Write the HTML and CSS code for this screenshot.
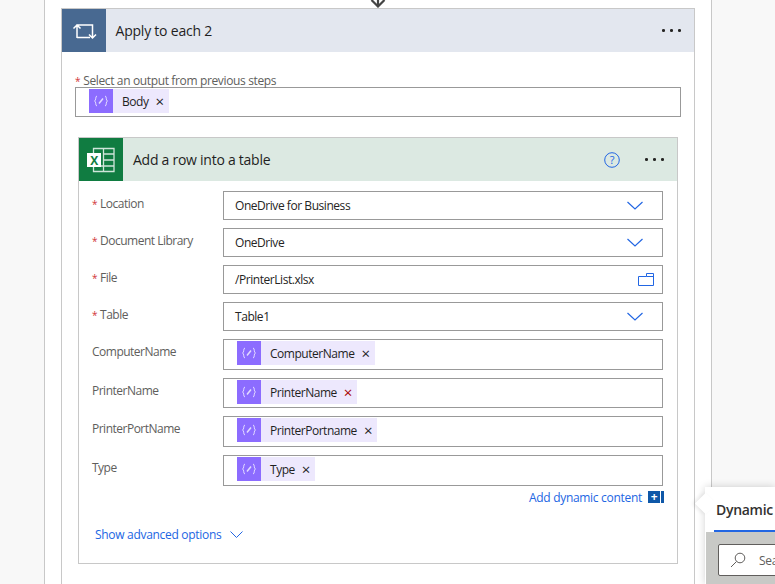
FILE: index.html
```html
<!DOCTYPE html>
<html lang="en">

<head>
    <meta charset="UTF-8" />
    <title>Add a row into a table</title>
    <link rel="stylesheet" href="styles.css">
</head>

<body>
    <div class="canvas">
        <div class="connector">
            <svg width="18" height="8" viewBox="0 0 18 8"><path d="M9 -6V5M2.500 0L9 6.500L15.500 0" fill="none" stroke="#444" stroke-width="2.200"/></svg>
        </div>
        <div class="card outer">
            <div class="card-head head-loop">
                <div class="head-icon icon-loop">
                    <svg width="44" height="44" viewBox="0 0 44 44"><path d="M15 29V16H30.500V29M11.500 19.500L15 16L18.500 19.500M27 25.500L30.500 29L34 25.500M15 28.500H28" fill="none" stroke="#fff" stroke-width="1.500"/></svg>
                </div>
                <div class="head-title">Apply to each 2</div>
                <div class="dots"><i></i><i></i><i></i></div>
            </div>
            <div class="outer-body">
                <div class="top-label"><span class="req">*</span>Select an output from previous steps</div>
                <div class="box box-top">
                    <span class="token">
                        <span class="token-icon"><svg width="16" height="12" viewBox="0 0 16 12"><use href="#expr"/></svg></span>
                        <span class="token-text">Body</span><span class="token-x">×</span>
                    </span>
                </div>

                <div class="card inner">
                    <div class="card-head head-excel">
                        <div class="head-icon icon-excel">
                            <svg width="44" height="44" viewBox="0 0 44 44">
                                <path d="M14.500 10.500H35V33.500H14.500ZM24.500 10.500V33.500M24.500 16H35M24.500 22H35M24.500 28H35M14.500 28H24.500" fill="none" stroke="#fff" stroke-opacity=".8" stroke-width="1.300"/>
                                <rect x="8" y="15" width="14" height="14" fill="#fff"/>
                                <text x="15" y="26.500" text-anchor="middle" class="excel-x">X</text>
                            </svg>
                        </div>
                        <div class="head-title title-excel">Add a row into a table</div>
                        <svg class="help" width="16" height="16" viewBox="0 0 16 16">
                            <circle cx="8" cy="8" r="7.300" fill="none" stroke="#2266e3"/>
                            <text x="8" y="12" text-anchor="middle" class="help-mark">?</text>
                        </svg>
                        <div class="dots"><i></i><i></i><i></i></div>
                    </div>
                    <div class="form">
                        <div class="row">
                            <div class="label"><span class="req">*</span>Location</div>
                            <div class="box box-text"><span class="value">OneDrive for Business</span>
                                <svg class="chev" width="16" height="9" viewBox="0 0 16 9"><path d="M.500 1L8 8L15.500 1" fill="none" stroke="#2266e3" stroke-width="1.200"/></svg>
                            </div>
                        </div>
                        <div class="row">
                            <div class="label"><span class="req">*</span>Document Library</div>
                            <div class="box box-text"><span class="value">OneDrive</span>
                                <svg class="chev" width="16" height="9" viewBox="0 0 16 9"><path d="M.500 1L8 8L15.500 1" fill="none" stroke="#2266e3" stroke-width="1.200"/></svg>
                            </div>
                        </div>
                        <div class="row">
                            <div class="label"><span class="req">*</span>File</div>
                            <div class="box box-text"><span class="value">/PrinterList.xlsx</span>
                                <svg class="folder" width="16" height="13" viewBox="0 0 16 13"><path d="M.500 3.500H8.500V.500H15.500V12.500H.500ZM8.500 3.500H15.500" fill="none" stroke="#2266e3"/></svg>
                            </div>
                        </div>
                        <div class="row">
                            <div class="label"><span class="req">*</span>Table</div>
                            <div class="box box-text"><span class="value">Table1</span>
                                <svg class="chev" width="16" height="9" viewBox="0 0 16 9"><path d="M.500 1L8 8L15.500 1" fill="none" stroke="#2266e3" stroke-width="1.200"/></svg>
                            </div>
                        </div>
                        <div class="row">
                            <div class="label">ComputerName</div>
                            <div class="box box-token">
                                <span class="token">
                                    <span class="token-icon"><svg width="16" height="12" viewBox="0 0 16 12"><use href="#expr"/></svg></span>
                                    <span class="token-text">ComputerName</span><span class="token-x">×</span>
                                </span>
                            </div>
                        </div>
                        <div class="row">
                            <div class="label">PrinterName</div>
                            <div class="box box-token box-short">
                                <span class="token">
                                    <span class="token-icon"><svg width="16" height="12" viewBox="0 0 16 12"><use href="#expr"/></svg></span>
                                    <span class="token-text">PrinterName</span><span class="token-x x-red">×</span>
                                </span>
                            </div>
                        </div>
                        <div class="row">
                            <div class="label">PrinterPortName</div>
                            <div class="box box-token">
                                <span class="token">
                                    <span class="token-icon"><svg width="16" height="12" viewBox="0 0 16 12"><use href="#expr"/></svg></span>
                                    <span class="token-text">PrinterPortname</span><span class="token-x">×</span>
                                </span>
                            </div>
                        </div>
                        <div class="row">
                            <div class="label">Type</div>
                            <div class="box box-token">
                                <span class="token">
                                    <span class="token-icon"><svg width="16" height="12" viewBox="0 0 16 12"><use href="#expr"/></svg></span>
                                    <span class="token-text">Type</span><span class="token-x">×</span>
                                </span>
                            </div>
                        </div>
                        <div class="dynamic-link">
                            <span>Add dynamic content</span>
                            <span class="plus">+</span><span class="plus-bar"></span>
                        </div>
                        <div class="advanced">
                            <span>Show advanced options</span>
                            <svg width="13" height="7" viewBox="0 0 13 7"><path d="M.500 .500L6.500 6.500L12.500 .500" fill="none" stroke="#2266e3"/></svg>
                        </div>
                    </div>
                </div>
            </div>
        </div>
    </div>

    <div class="panel">
        <div class="panel-arrow"></div>
        <div class="panel-tab">Dynamic</div>
        <div class="panel-search">
            <div class="search-box">
                <svg width="16" height="16" viewBox="0 0 16 16"><circle cx="10" cy="6" r="4.800" fill="none" stroke="#605e5c"/><path d="M6.500 9.500L1 15" stroke="#605e5c" fill="none"/></svg>
                <span>Search</span>
            </div>
        </div>
    </div>

    <svg width="0" height="0" class="defs">
        <defs>
            <g id="expr" fill="none" stroke="#fff" stroke-opacity=".75">
                <path d="M4 1C2 1 3.500 5.500 1.500 6C3.500 6.500 2 11 4 11M12 1C14 1 12.500 5.500 14.500 6C12.500 6.500 14 11 12 11"/>
                <path d="M6 8.500L10 3.500"  stroke-width="1.500"/>
            </g>
        </defs>
    </svg>
</body>

</html>
```
FILE: styles.css
```css
* {
  box-sizing: border-box;
}

html,
body {
  margin: 0;
  height: 584px;
  overflow: hidden;
}

body {
  font-family: 'Open Sans', 'Noto Sans', sans-serif;
  font-size: 12px;
  color: #252423;
  background-color: #f8f8f8;
  letter-spacing: -0.3px;
}

.defs {
  position: absolute;
}

.canvas {
  width: 668px;
  height: 584px;
  margin-left: 44px;
  padding: 0 16px;
  background-color: #fff;
  border-left: 1px solid #c8c8c8;
  border-right: 1px solid #c8c8c8;
}

.connector {
  display: flex;
  justify-content: center;
  height: 8px;
}

.connector svg {
  display: block;
}

.card {
  border: 1px solid #c8c8c8;
  background-color: #fff;
}

.outer {
  height: 600px;
}

.card-head {
  display: flex;
  align-items: center;
  height: 43px;
}

.head-loop {
  background-color: #e3e7ef;
}

.head-excel {
  background-color: #dce9e2;
}

.head-icon {
  width: 44px;
  height: 43px;
  flex: none;
  overflow: hidden;
}

.head-icon svg {
  display: block;
}

.icon-loop {
  background-color: #486991;
}

.icon-excel {
  background-color: #107c41;
}

.excel-x {
  font-family: 'Open Sans', sans-serif;
  font-size: 12px;
  font-weight: 700;
  fill: #107c41;
}

.head-title {
  flex: 1;
  padding-left: 9.500px;
  font-size: 14px;
  letter-spacing: -0.22px;
  color: #1f1f1f;
}

.title-excel {
  padding-left: 10px;
  letter-spacing: -0.26px;
}

.help {
  flex: none;
  margin-right: 25px;
}

.help-mark {
  font-family: 'Open Sans', sans-serif;
  font-size: 11px;
  fill: #2266e3;
}

.dots {
  display: flex;
  gap: 5.5px;
  flex: none;
  margin-right: 13px;
}

.dots i {
  display: block;
  width: 2.600px;
  height: 2.600px;
  border-radius: 50%;
  background-color: #252423;
}

.outer-body {
  padding: 21px 13px 0 13px;
}

.top-label {
  height: 14px;
  line-height: 16px;
  letter-spacing: -0.36px;
  color: #605e5c;
}

.req {
  font-size: 10px;
  color: #d13438;
  margin-right: 3px;
}

.box {
  border: 1px solid #999;
  background-color: #fff;
}

.box-top {
  height: 30px;
  padding: 1px 13px;
}

.inner {
  margin: 20px 3px 0 3px;
  height: 427px;
}

.form {
  padding: 10px 14px 0 13px;
}

.row {
  display: flex;
  margin-bottom: 8px;
}

.label {
  width: 131px;
  flex: none;
  padding-top: 5px;
  line-height: 16px;
  letter-spacing: -0.5px;
  color: #605e5c;
}

.box-text,
.box-token {
  flex: 1;
}

.box-text {
  display: flex;
  align-items: center;
  justify-content: space-between;
  height: 29px;
  padding: 0 19px 0 11px;
  letter-spacing: -0.45px;
}

.box-text .folder {
  margin-right: -11px;
}

.box-token {
  height: 31px;
  padding: 1px 13px;
}

.box-short {
  height: 30px;
}

.token {
  display: inline-flex;
  align-items: center;
  height: 24px;
  background-color: #ede8fd;
  color: #1f1f1f;
}

.token-icon {
  display: flex;
  align-items: center;
  justify-content: center;
  width: 24px;
  height: 24px;
  margin-right: 9px;
  background-color: #8c6cff;
}

.token-text {
  padding-top: 1px;
  letter-spacing: -0.47px;
}

.token-x {
  margin: 0 5px 0 7px;
  font-size: 15px;
  letter-spacing: 0;
}

.x-red {
  color: #a80000;
}

.dynamic-link {
  display: flex;
  align-items: center;
  justify-content: flex-end;
  height: 16px;
  margin-top: -5px;
  margin-right: -1px;
  color: #2266e3;
}

.plus {
  width: 12px;
  height: 12px;
  margin-left: 6px;
  line-height: 11px;
  text-align: center;
  color: #fff;
  font-weight: 700;
  background-color: #0f58a8;
}

.plus-bar {
  width: 3px;
  height: 12px;
  margin-left: 1px;
  background-color: #0f58a8;
}

.advanced {
  display: flex;
  align-items: center;
  gap: 9px;
  margin-top: 21px;
  margin-left: 3px;
  height: 16px;
  color: #2266e3;
}

.panel {
  position: absolute;
  left: 705px;
  top: 487px;
  width: 70px;
  height: 97px;
  padding-left: 1px;
  background-color: #fff;
  box-shadow: 0 0 8px rgba(0, 0, 0, 0.18);
}

.panel-arrow {
  position: absolute;
  left: -7.500px;
  top: 8.500px;
  width: 15px;
  height: 15px;
  background-color: #fff;
  transform: rotate(45deg);
  box-shadow: -2px 2px 4px rgba(0, 0, 0, 0.08);
}

.panel-tab {
  position: relative;
  height: 45px;
  margin-left: 8px;
  padding: 13px 0 0 2px;
  border-bottom: 2px solid #2266e3;
  font-size: 14px;
  font-weight: 600;
  color: #323130;
  letter-spacing: -0.3px;
  white-space: nowrap;
}

.panel-search {
  height: 52px;
  padding: 12px 0 0 12px;
  background-color: #c8c9c6;
}

.search-box {
  display: flex;
  align-items: center;
  gap: 13px;
  width: 80px;
  height: 32px;
  padding-left: 11px;
  background-color: #fff;
  border: 1px solid #605e5c;
  border-radius: 2px;
  color: #605e5c;
  white-space: nowrap;
  overflow: hidden;
}

.search-box svg {
  flex: none;
}
```
